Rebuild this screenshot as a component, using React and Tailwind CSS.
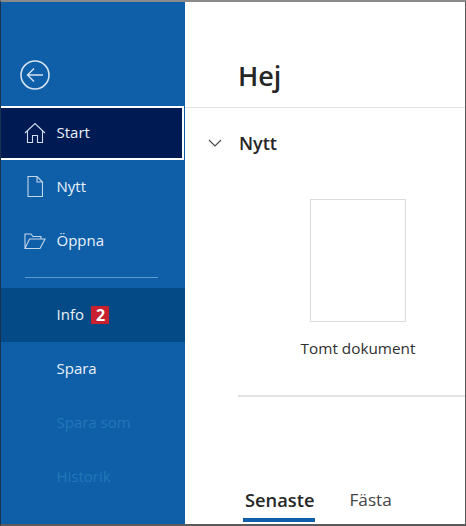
import React from "react";

const font = { fontFamily: '"Open Sans", "Noto Sans", sans-serif' };

const BackIcon = () => (
   <svg width="32" height="32" viewBox="0 0 32 32" fill="none" stroke="#d5e3f1" strokeWidth="1.6">
      <circle cx="16" cy="16" r="14" />
      <path d="M24 16H8.500M15 9.500 8.500 16l6.500 6.500" strokeWidth="1.4" />
   </svg>
);

const HomeIcon = () => (
   <svg width="22" height="22" viewBox="0 0 22 22" fill="none" stroke="#cfdcec" strokeWidth="1.1">
      <path d="M1 11 11 1.500 21 11M3.500 9v11.500h5V13.500h5v7h5V9" />
   </svg>
);

const FileIcon = () => (
   <svg width="16" height="21" viewBox="0 0 16 21" fill="none" stroke="#c4d6e9" strokeWidth="1.1">
      <path d="M1 .500h9l5.500 5.500v14.500H1zM10 .500V6h5.500" />
   </svg>
);

const FolderIcon = () => (
   <svg width="22" height="18" viewBox="0 0 22 18" fill="none" stroke="#c4d6e9" strokeWidth="1.1">
      <path d="M1 16V2h6l2 2.500h8V7M1 16.500h15L21 7H5.500L1 16.500z" />
   </svg>
);

const NavRow = ({ icon, label, className = "", textClass = "text-[#eaf1f8]", children }) => (
   <div className={`h-[54px] flex items-center shrink-0 pb-[1px] ${className}`}>
      <div className="w-[55.500px] flex justify-center pl-[13px] shrink-0">{icon}</div>
      <span className={`text-[15px] ${textClass}`}>{label}</span>
      {children}
   </div>
);

const App = () => {
   return (
      <div
         className="w-[466px] h-[526px] flex overflow-hidden bg-white border-t-2 border-b-2 border-l border-r border-t-[#8a8a8a] border-b-[#5a5a5a] border-l-[#17324f] border-r-[#5a5a5a]"
         style={font}
      >
         {/* Sidebar */}
         <div className="w-[184px] shrink-0 bg-[#0f5fa8] flex flex-col overflow-hidden">
            <div className="h-[104px] shrink-0 pt-[57px] pl-[18px]">
               <BackIcon />
            </div>

            <NavRow
               icon={<HomeIcon />}
               label="Start"
               className="bg-[#001b54] border-2 border-white border-l-0 mr-[1px]"
            />
            <NavRow icon={<FileIcon />} label="Nytt" />
            <NavRow icon={<FolderIcon />} label="Öppna" />

            <div className="h-[20px] shrink-0 pt-[9px] pl-[24px]">
               <div className="w-[133px] h-px bg-[#5b9bcf]" />
            </div>

            <NavRow label="Info" className="bg-[#044a87]">
               <span className="ml-[7.500px] w-[18px] h-[18px] bg-[#c8202f] text-white text-[16px] font-bold flex items-center justify-center">
                  2
               </span>
            </NavRow>
            <NavRow label="Spara" />
            <NavRow label="Spara som" textClass="text-[#2177b8]" />
            <NavRow label="Historik" textClass="text-[#2177b8]" />
            <NavRow label="Skriv ut" />
         </div>

         {/* Main */}
         <div className="flex-1 min-w-0 flex flex-col">
            <div className="h-[106px] shrink-0 border-b border-[#e1e1e1] pt-[56px] pl-[53px]">
               <h1 className="text-[27px] leading-[36px] font-semibold text-[#262626]">Hej</h1>
            </div>

            <div className="flex items-center h-[70px] shrink-0 pl-[23px]">
               <svg width="14" height="8" viewBox="0 0 14 8" fill="none" stroke="#444" strokeWidth="1.1">
                  <path d="M1 1l6 6 6-6" />
               </svg>
               <span className="ml-[17px] text-[18px] font-semibold text-[#262626]">Nytt</span>
            </div>

            <div className="ml-[125px] mt-[21px] w-[96px] flex flex-col items-center">
               <div className="w-[96px] h-[123px] shrink-0 bg-white border border-[#dcdcdc]" />
               <span className="mt-[15px] whitespace-nowrap text-[15.300px] font-medium text-[#303030]">
                  Tomt dokument
               </span>
            </div>

            <div className="ml-[53px] mt-[35px] h-[2px] bg-[#e3e3e3] shrink-0" />

            <div className="flex ml-[60px] mt-[89px] gap-[35px]">
               <div className="relative">
                  <span className="text-[18.300px] leading-[27px] font-semibold text-[#262626] block">Senaste</span>
                  <div className="absolute left-[-2px] right-[-1px] top-[32px] h-[4px] bg-[#0f5fa8]" />
               </div>
               <span className="text-[17.200px] leading-[27px] font-medium text-[#444444]">Fästa</span>
            </div>
         </div>
      </div>
   );
};

export default App;
